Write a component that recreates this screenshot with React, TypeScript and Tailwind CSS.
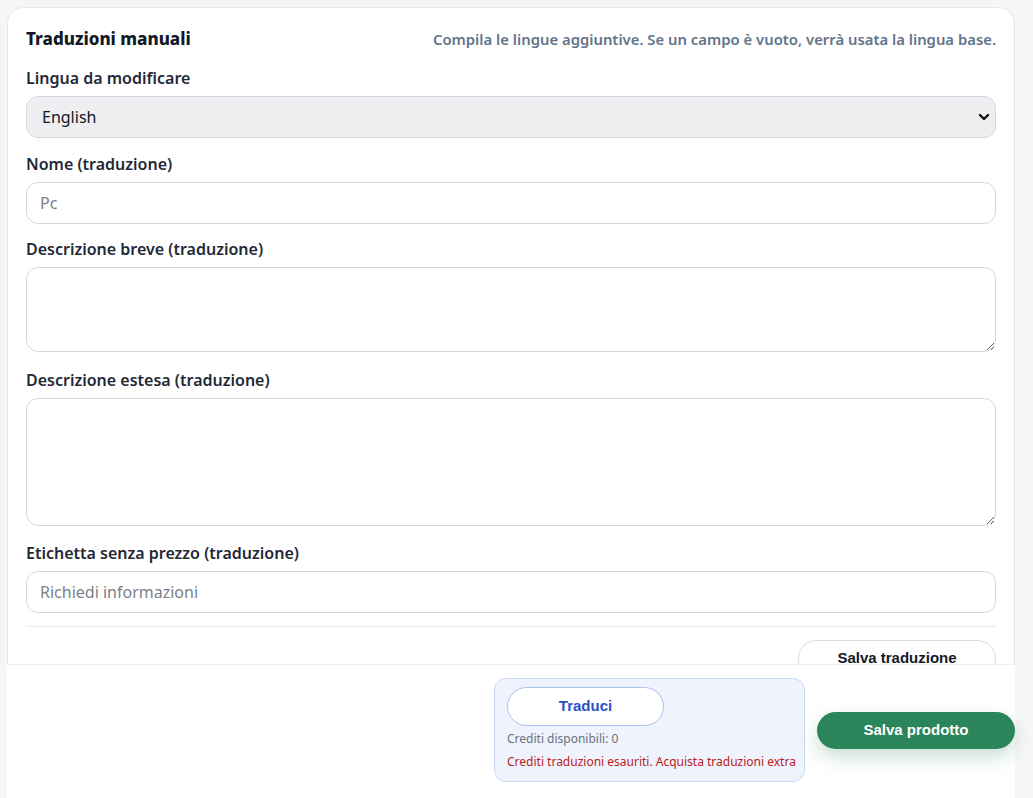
import React from "react";

const fieldCls =
  "block w-full rounded-xl border border-[#d5d5e6] bg-white px-[13px] text-[16px] text-[#111827] placeholder:text-[#7b7f87] outline-none";

const Label = ({ children }: { children: React.ReactNode }) => (
  <label className="block mb-[6px] text-[16px] leading-6 font-semibold text-[#1f2937]">{children}</label>
);

export default function App() {
  return (
    <div className="h-[798px] overflow-hidden flex flex-col bg-[#f6f6f7] font-['Noto_Sans',sans-serif]">
      <main className="flex-1 overflow-hidden pt-[7px] px-[7px] pr-[18px]">
        <section className="rounded-2xl border border-[#e6e7eb] bg-white px-[18px] pt-[18px] pb-6">
          <div className="flex items-center justify-between h-[26px] mb-[14px]">
            <h2 className="text-[17px] font-extrabold text-[#111827]">Traduzioni manuali</h2>
            <p className="text-[14.85px] font-semibold text-[#64748b]">
              Compila le lingue aggiuntive. Se un campo è vuoto, verrà usata la lingua base.
            </p>
          </div>

          <div className="mb-[14px]">
            <Label>Lingua da modificare</Label>
            <div className="relative">
              <select
                defaultValue="en"
                className="block w-full h-[42px] appearance-none rounded-xl border border-[#d5d5e6] bg-[#efeff1] pl-[15px] text-[16px] text-[#111827] outline-none"
              >
                <option value="en">English</option>
                <option value="de">Deutsch</option>
                <option value="fr">Français</option>
              </select>
              <svg
                className="pointer-events-none absolute right-[6px] top-[16px]"
                width="12"
                height="10"
                viewBox="0 0 12 10"
              >
                <path d="M2 3 L6 7 L10 3" fill="none" stroke="#111" strokeWidth="2.4" strokeLinecap="round" strokeLinejoin="round" />
              </svg>
            </div>
          </div>

          <div className="mb-[13px]">
            <Label>Nome (traduzione)</Label>
            <input className={`${fieldCls} h-[42px]`} placeholder="Pc" />
          </div>

          <div className="mb-[16px]">
            <Label>Descrizione breve (traduzione)</Label>
            <textarea className={`${fieldCls} h-[85px] py-2`} />
          </div>

          <div className="mb-[15px]">
            <Label>Descrizione estesa (traduzione)</Label>
            <textarea className={`${fieldCls} h-[128px] py-2`} />
          </div>

          <div className="mb-[13px]">
            <Label>Etichetta senza prezzo (traduzione)</Label>
            <input className={`${fieldCls} h-[42px]`} placeholder="Richiedi informazioni" />
          </div>

          <div className="border-t border-[#e8e9ed] pt-[13px] flex justify-end">
            <button className="h-[37px] w-[198px] rounded-full border border-[#d9dbe1] bg-white font-['Liberation_Sans',sans-serif] text-[15px] font-bold text-[#111827]">
              Salva traduzione
            </button>
          </div>
        </section>
      </main>

      <footer className="h-[134px] shrink-0 ml-[7px] mr-[18px] bg-white border-t border-[#eceef1] flex items-center justify-end gap-3 pb-[3px]">
        <div className="w-[311px] rounded-xl border border-[#c9d8f3] bg-[#eef3fd] pl-[12px] pt-[8px] pb-[10px]">
          <button className="h-[39px] w-[157px] rounded-full border border-[#a9c0ee] bg-white font-['Liberation_Sans',sans-serif] text-[15px] font-bold text-[#2b50c5]">
            Traduci
          </button>
          <p className="mt-[4px] text-[12px] leading-[18px] text-[#6b7280]">Crediti disponibili: 0</p>
          <p className="mt-[5px] text-[12px] leading-[18px] text-[#b91c1c]">
            Crediti traduzioni esauriti. Acquista traduzioni extra
          </p>
        </div>
        <button className="h-[37px] w-[198px] rounded-full bg-[#2a855b] font-['Liberation_Sans',sans-serif] text-[15px] font-bold text-white shadow-[0_8px_18px_rgba(42,133,91,0.25)]">
          Salva prodotto
        </button>
      </footer>
    </div>
  );
}
